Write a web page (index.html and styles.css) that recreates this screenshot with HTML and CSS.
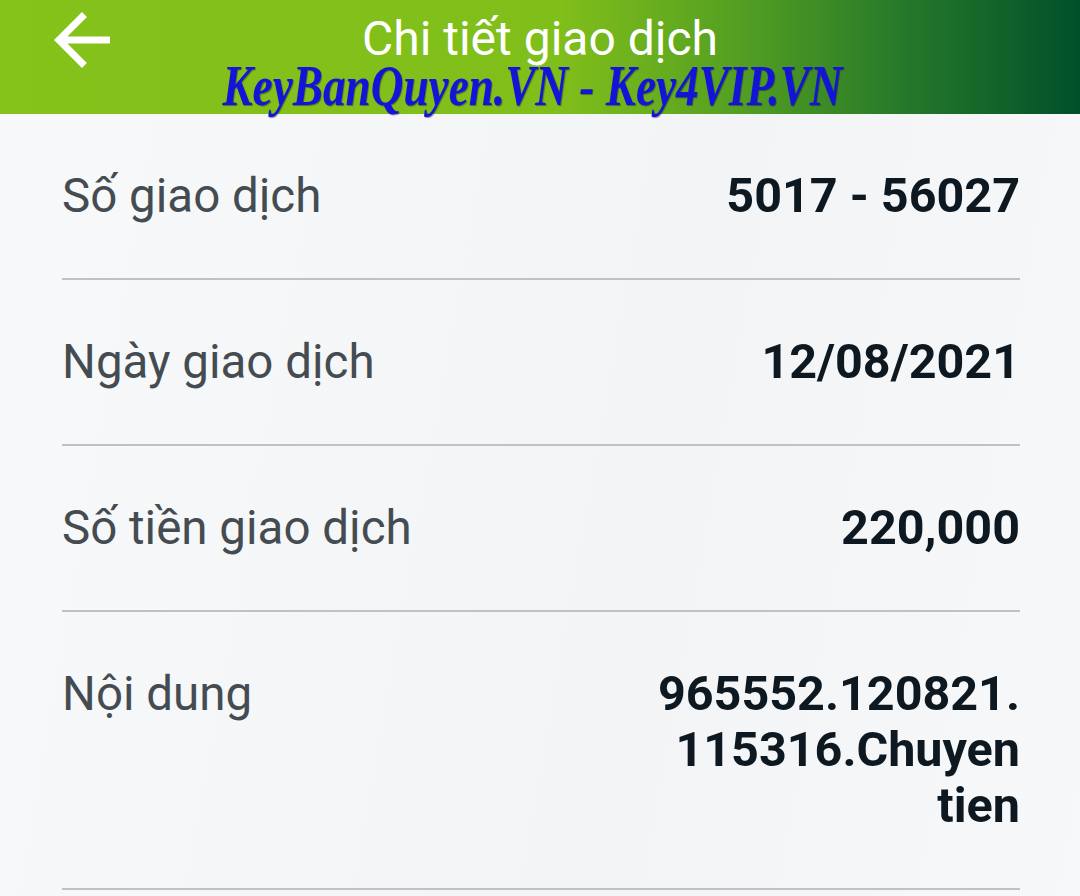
FILE: index.html
```html
<!DOCTYPE html>
<html lang="vi">
<head>
<meta charset="utf-8">
<title>Chi tiết giao dịch</title>
<link rel="stylesheet" href="styles.css">
</head>
<body>
<header class="topbar">
  <div class="back">
    <svg viewBox="0 0 24 24" width="84" height="84"><path fill="#fff" d="M20 11H7.83l5.59-5.59L12 4l-8 8 8 8 1.41-1.41L7.83 13H20v-2z"/></svg>
  </div>
  <div class="titles">
    <div class="title">Chi tiết giao dịch</div>
    <div class="mark">KeyBanQuyen.VN - Key4VIP.VN</div>
  </div>
</header>
<main class="list">
  <div class="row">
    <div class="label">Số giao dịch</div>
    <div class="value">5017 - 56027</div>
  </div>
  <div class="row">
    <div class="label">Ngày giao dịch</div>
    <div class="value">12/08/2021</div>
  </div>
  <div class="row">
    <div class="label">Số tiền giao dịch</div>
    <div class="value">220,000</div>
  </div>
  <div class="row">
    <div class="label">Nội dung</div>
    <div class="value wrap">965552.120821.<wbr>115316.Chuyen tien</div>
  </div>
</main>
</body>
</html>
```
FILE: styles.css
```css
html, body {
  margin: 0;
  padding: 0;
}
body {
  width: 1080px;
  height: 896px;
  overflow: hidden;
  background: linear-gradient(100deg, #f8f9fa 0%, #f2f4f6 60%, #f6f8f9 100%);
  font-family: Roboto, "Noto Sans", sans-serif;
}
.topbar {
  height: 114px;
  position: relative;
  background: linear-gradient(to right, #85c21a 0%, #80be1a 52%, #55a022 68%, #25782a 84%, #00502a 100%);
}
.back {
  position: absolute;
  left: 40px;
  top: -2px;
  width: 84px;
  height: 84px;
}
.back svg { display: block; }
.titles {
  display: flex;
  flex-direction: column;
  align-items: center;
}
.title {
  color: #fff;
  font-size: 48px;
  line-height: 50px;
  padding-top: 14px;
  font-weight: 400;
}
.mark {
  font-family: "Liberation Serif", "Times New Roman", serif;
  font-style: italic;
  font-weight: bold;
  color: #1414d8;
  font-size: 58px;
  line-height: 44px;
  margin-top: 0;
  margin-right: 16px;
  transform: scaleX(0.78);
  text-shadow: 1px 1px 1px rgba(0,0,60,0.4);
  white-space: nowrap;
}
.list {
  padding: 0 60px 0 62px;
}
.row {
  display: flex;
  justify-content: space-between;
  align-items: flex-start;
  padding: 54px 0;
  border-bottom: 2px solid #bfc1c3;
}
.label {
  color: #454c51;
  font-size: 47.5px;
  line-height: 56px;
  white-space: nowrap;
}
.value {
  color: #0d1820;
  font-weight: bold;
  font-size: 48.5px;
  line-height: 56px;
  text-align: right;
  white-space: nowrap;
}
.value.wrap {
  white-space: normal;
  width: 380px;
}
```
